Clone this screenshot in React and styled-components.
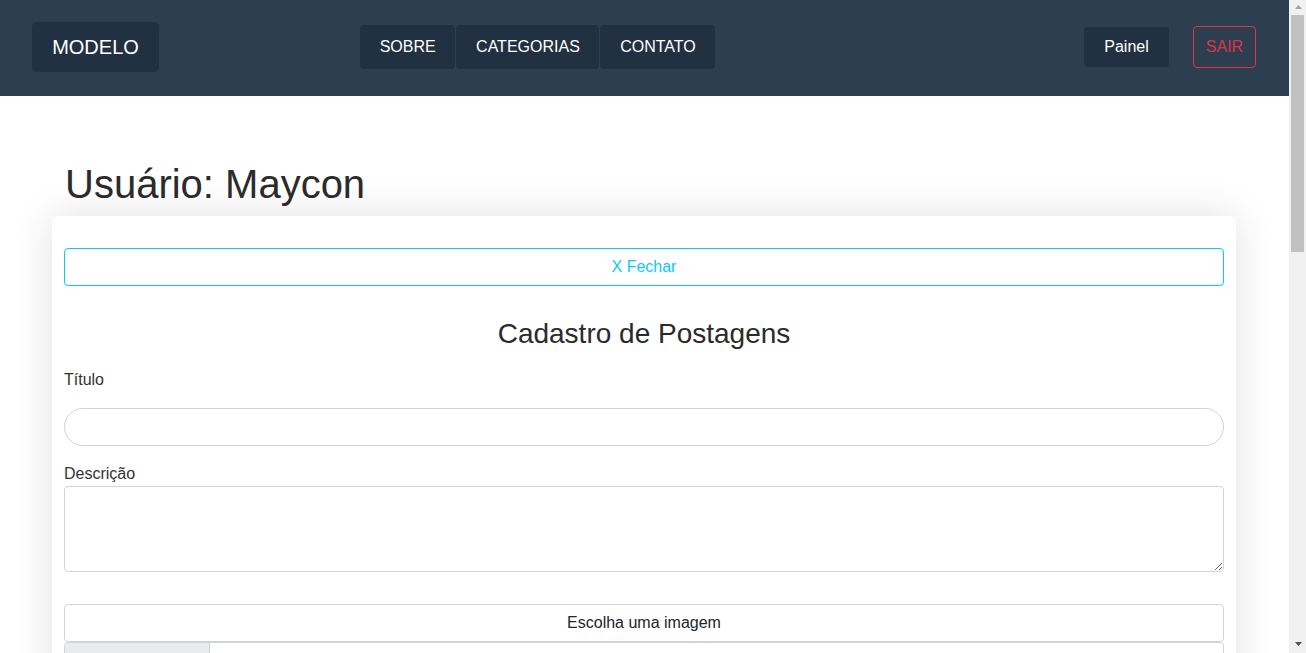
import styled, { createGlobalStyle } from "styled-components";

const GlobalStyle = createGlobalStyle`
  body {
    margin: 0;
    font-family: "Liberation Sans", Arial, sans-serif;
    font-size: 16px;
    color: #212529;
    background: #fff;
  }
  * {
    box-sizing: border-box;
  }
`;

const App = () => {
  return (
    <>
      <GlobalStyle />
      <Page>
        <Navbar>
          <Brand>MODELO</Brand>
          <Menu>
            <MenuItem>SOBRE</MenuItem>
            <MenuItem>CATEGORIAS</MenuItem>
            <MenuItem>CONTATO</MenuItem>
          </Menu>
          <Actions>
            <PanelButton>Painel</PanelButton>
            <LogoutButton>SAIR</LogoutButton>
          </Actions>
        </Navbar>
        <Main>
          <Title>Usuário: Maycon</Title>
          <Card>
            <CloseButton>X Fechar</CloseButton>
            <FormTitle>Cadastro de Postagens</FormTitle>
            <Field>
              <Label>Título</Label>
              <PillInput type="text" />
            </Field>
            <Field $tight>
              <Label>Descrição</Label>
              <TextArea />
            </Field>
            <ImageButton>Escolha uma imagem</ImageButton>
            <FileRow>
              <FileButton>Choose File</FileButton>
              <FileName>No file chosen</FileName>
            </FileRow>
            <SubmitButton>Cadastrar</SubmitButton>
          </Card>
        </Main>
      </Page>
      <ScrollBar>
        <Arrow width="7" height="4" viewBox="0 0 7 4">
          <path d="M3.5 0 L7 4 L0 4 Z" fill="#a3a3a3" />
        </Arrow>
        <Thumb />
        <Arrow width="7" height="4" viewBox="0 0 7 4" $bottom>
          <path d="M0 0 L7 0 L3.5 4 Z" fill="#505050" />
        </Arrow>
      </ScrollBar>
    </>
  );
};

export default App;

const Page = styled.div`
  margin-right: 17px;
  padding-bottom: 40px;
`;

const ScrollBar = styled.div`
  position: fixed;
  top: 0;
  right: 0;
  width: 17px;
  height: 100vh;
  background: #f1f1f1;
  display: flex;
  flex-direction: column;
  align-items: center;
`;

const Arrow = styled.svg`
  margin-top: ${(props) => (props.$bottom ? "auto" : "5px")};
  margin-bottom: ${(props) => (props.$bottom ? "7px" : "0")};
  margin-left: 1px;
`;

const Thumb = styled.div`
  margin-top: 6px;
  width: 13px;
  height: 237px;
  background: #c1c1c1;
`;

const Navbar = styled.nav`
  height: 96px;
  background: #2d3e50;
  display: flex;
  align-items: center;
  padding: 0 33px 0 32px;
`;

const Brand = styled.div`
  height: 50px;
  width: 127px;
  display: flex;
  align-items: center;
  justify-content: center;
  background: #223141;
  color: #fff;
  border-radius: 5px;
  font-size: 20px;
  margin-top: -2px;
`;

const Menu = styled.div`
  display: flex;
  margin-left: 201px;
  margin-top: -2px;
`;

const MenuItem = styled.div`
  height: 44px;
  padding: 0 19.7px;
  display: flex;
  align-items: center;
  background: #223141;
  color: #fff;
  border-radius: 4px;
  font-size: 16px;
  & + & {
    margin-left: 1px;
  }
`;

const Actions = styled.div`
  margin-left: auto;
  display: flex;
  align-items: center;
  gap: 24px;
  margin-top: -2px;
`;

const PanelButton = styled.div`
  height: 40px;
  width: 85px;
  display: flex;
  align-items: center;
  justify-content: center;
  background: #223141;
  color: #fff;
  border-radius: 4px;
  font-size: 16px;
`;

const LogoutButton = styled.div`
  height: 42px;
  width: 63px;
  display: flex;
  align-items: center;
  justify-content: center;
  border: 1px solid #dc3545;
  color: #dc3545;
  border-radius: 4px;
  font-size: 16px;
`;

const Main = styled.main`
  width: 1184px;
  margin: 0 53px 0 52px;
  padding-top: 64px;
`;

const Title = styled.h1`
  margin: 0 0 8px 13px;
  font-size: 40px;
  font-weight: 400;
  line-height: 48px;
  color: #2b2b2b;
`;

const Card = styled.div`
  background: #fff;
  border-radius: 6px;
  box-shadow: 0 0 40px rgba(0, 0, 0, 0.12);
  padding: 32px 12px 40px;
  display: flex;
  flex-direction: column;
`;

const CloseButton = styled.button`
  height: 38px;
  width: 100%;
  background: #fff;
  border: 1px solid #0dcaf0;
  border-radius: 4px;
  color: #0dcaf0;
  font-family: inherit;
  font-size: 16px;
`;

const FormTitle = styled.h2`
  margin: 31px 0 0;
  text-align: center;
  font-size: 28px;
  font-weight: 400;
  line-height: 34px;
  color: #2b2b2b;
`;

const Field = styled.div`
  display: flex;
  flex-direction: column;
  gap: ${(props) => (props.$tight ? "0" : "16px")};
  margin-top: ${(props) => (props.$tight ? "16px" : "17px")};
`;

const Label = styled.label`
  font-size: 16px;
  line-height: 24px;
  color: #333;
`;

const PillInput = styled.input`
  height: 38px;
  width: 100%;
  border: 1px solid #ced4da;
  border-radius: 19px;
  padding: 0 16px;
  font-family: inherit;
  font-size: 16px;
`;

const TextArea = styled.textarea`
  height: 86px;
  width: 100%;
  border: 1px solid #ced4da;
  border-radius: 4px;
  padding: 6px 12px;
  font-family: inherit;
  font-size: 16px;
`;

const ImageButton = styled.button`
  margin-top: 32px;
  height: 38px;
  width: 100%;
  background: #fff;
  border: 1px solid #ced4da;
  border-radius: 4px;
  color: #212529;
  font-family: inherit;
  font-size: 16px;
`;

const FileRow = styled.div`
  display: flex;
  height: 38px;
  border: 1px solid #ced4da;
  border-radius: 4px;
  overflow: hidden;
`;

const FileButton = styled.div`
  width: 145px;
  display: flex;
  align-items: center;
  padding: 0 12px;
  background: #e9ecef;
  border-right: 1px solid #ced4da;
  color: #212529;
`;

const FileName = styled.div`
  display: flex;
  align-items: center;
  padding: 0 12px;
  color: #212529;
`;

const SubmitButton = styled.button`
  margin-top: 24px;
  height: 38px;
  width: 100%;
  background: #fff;
  border: 1px solid #198754;
  border-radius: 4px;
  color: #198754;
  font-family: inherit;
  font-size: 16px;
`;
